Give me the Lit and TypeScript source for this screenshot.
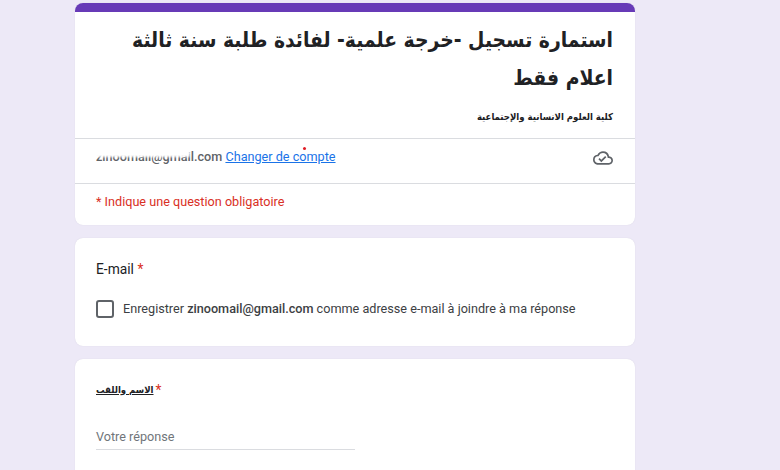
import { LitElement, html, css } from "lit";
import { customElement } from "lit/decorators.js";

@customElement("app-root")
export class AppRoot extends LitElement {
  static styles = css`
    :host {
      display: block;
      height: 470px;
      overflow: hidden;
      background: #ede9f7;
      font-family: Roboto, "Liberation Sans", sans-serif;
      color: #202124;
    }
    .page {
      display: flex;
      flex-direction: column;
      gap: 13px;
      width: 560px;
      margin-left: 75px;
      padding-top: 3px;
    }
    .card {
      background: #fff;
      border-radius: 8px;
      box-sizing: border-box;
      box-shadow: 0 0 1px #cfcbdd;
    }
    .head {
      overflow: hidden;
    }
    .bar {
      height: 9px;
      background: #673ab7;
    }
    .title-block {
      direction: rtl;
      padding: 9px 22px 0 10px;
      height: 126px;
      box-sizing: border-box;
    }
    h1 {
      margin: 0;
      font: bold 20.9px/38px "DejaVu Sans Condensed", "DejaVu Sans", sans-serif;
      font-stretch: condensed;
      color: #202124;
    }
    .sub {
      margin: 12px 0 0;
      font: bold 9.5px/16px "DejaVu Sans Condensed", "DejaVu Sans", sans-serif;
      font-stretch: condensed;
      color: #202124;
    }
    .account {
      position: relative;
      display: flex;
      align-items: flex-start;
      justify-content: space-between;
      height: 46px;
      box-sizing: border-box;
      padding: 10px 22px 0 21px;
      border-top: 1px solid #dadce0;
      border-bottom: 1px solid #dadce0;
      font-size: 12.65px;
      line-height: 16px;
    }
    .mail {
      font-weight: 500;
      color: #5f6368;
    }
    .mail-text {
      position: relative;
    }
    .mask {
      position: absolute;
      left: -2px;
      top: 0;
      width: 96px;
      height: 8px;
      background: #fff;
      filter: blur(1px);
    }
    .dot {
      position: absolute;
      left: 228px;
      top: 8px;
      width: 3px;
      height: 3px;
      border-radius: 50%;
      background: #e01b24;
    }
    a {
      color: #1a73e8;
      text-decoration: underline;
      font-weight: 400;
    }
    .cloud {
      display: block;
      width: 20px;
      height: 20px;
      margin-top: -1px;
      fill: #5f6368;
    }
    .required {
      padding: 10px 21px 0;
      height: 41px;
      box-sizing: border-box;
      font-size: 12.65px;
      line-height: 16px;
      color: #d93025;
    }
    .question {
      padding: 21px 21px 0;
      box-sizing: border-box;
    }
    .email {
      height: 108px;
    }
    .name {
      height: 130px;
    }
    .label {
      font-size: 13.8px;
      line-height: 20px;
      color: #202124;
    }
    .label-row {
      display: flex;
      align-items: center;
      gap: 2px;
      height: 20px;
    }
    .star {
      color: #d93025;
    }
    .check-row {
      display: flex;
      align-items: center;
      gap: 9px;
      margin-top: 20px;
      font-size: 12.65px;
      line-height: 20px;
      color: #3c4043;
    }
    .box {
      width: 18px;
      height: 18px;
      border: 2px solid #5f6368;
      border-radius: 3px;
      box-sizing: border-box;
    }
    .check-row b {
      font-weight: 500;
    }
    .ar {
      font: bold 9.5px/20px "DejaVu Sans Condensed", "DejaVu Sans", sans-serif;
      font-stretch: condensed;
      text-decoration: underline;
    }
    .input {
      width: 259px;
      margin-top: 27px;
      padding-bottom: 2px;
      border-bottom: 1px solid #dadce0;
      font-size: 12.65px;
      line-height: 20px;
      color: #70757a;
    }
  `;

  render() {
    return html`
      <div class="page">
        <section class="card head">
          <div class="bar"></div>
          <div class="title-block">
            <h1>استمارة تسجيل -خرجة علمية- لفائدة طلبة سنة ثالثة اعلام فقط</h1>
            <p class="sub">كلية العلوم الانسانية والإجتماعية</p>
          </div>
          <div class="account">
            <span class="mail-text">
              <span class="mail">zinoomail@gmail.com</span>
              <a href="#">Changer de compte</a>
              <span class="mask"></span>
            </span>
            <span class="dot"></span>
            <svg class="cloud" viewBox="0 0 24 24">
              <path d="M19.35 10.04A7.49 7.49 0 0 0 12 4C9.11 4 6.6 5.64 5.35 8.04A5.994 5.994 0 0 0 0 14c0 3.31 2.69 6 6 6h13c2.76 0 5-2.24 5-5 0-2.64-2.05-4.78-4.65-4.96zM19 18H6c-2.21 0-4-1.79-4-4 0-2.05 1.53-3.76 3.56-3.97l1.07-.11.5-.95A5.469 5.469 0 0 1 12 6c2.62 0 4.88 1.86 5.39 4.43l.3 1.5 1.53.11A2.98 2.98 0 0 1 22 15c0 1.65-1.35 3-3 3zm-9-3.82-2.09-2.09L6.5 13.5 10 17l6.01-6.01-1.41-1.41z"/>
            </svg>
          </div>
          <div class="required">* Indique une question obligatoire</div>
        </section>

        <section class="card question email">
          <div class="label">E-mail <span class="star">*</span></div>
          <div class="check-row">
            <span class="box"></span>
            <span>Enregistrer <b>zinoomail@gmail.com</b> comme adresse e-mail à joindre à ma réponse</span>
          </div>
        </section>

        <section class="card question name">
          <div class="label label-row"><span class="ar">الاسم واللقب</span><span class="star">*</span></div>
          <div class="input">Votre réponse</div>
        </section>
      </div>
    `;
  }
}
